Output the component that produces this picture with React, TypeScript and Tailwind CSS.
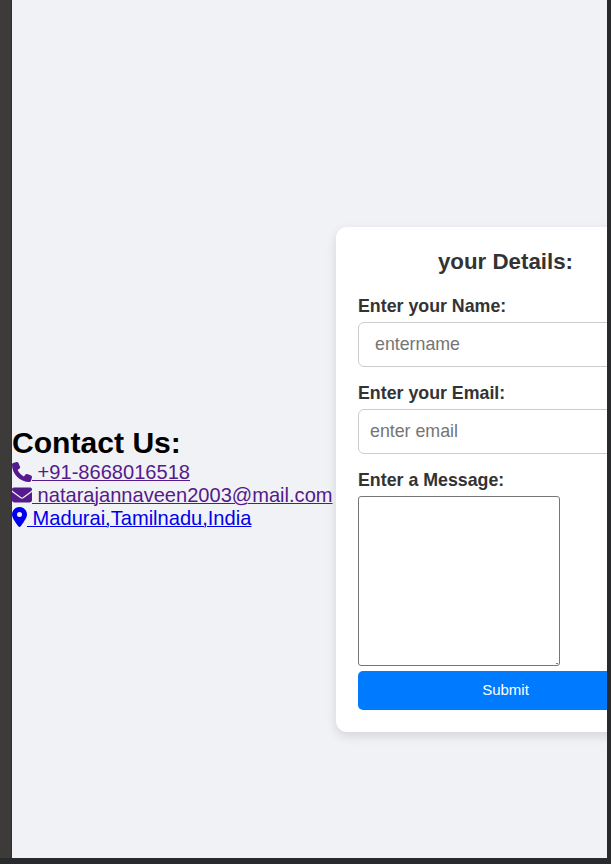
import { FaEnvelope, FaLocationDot, FaPhone } from "react-icons/fa6";

const labelClass = "block h-[20px] text-[17.8px] leading-[20px] font-bold text-[#333333]";
const inputClass =
  "block h-[45px] w-full rounded-[6px] border border-[#cccccc] bg-white text-[17.8px] text-[#333333] placeholder:text-[#757575] outline-none";
const linkTextClass = "whitespace-pre underline decoration-1 underline-offset-1";

export default function App() {
  return (
    <div className="h-[864px] w-[611px] overflow-hidden bg-[#292a2b] font-['Liberation_Sans',Arial,sans-serif]">
      <div className="flex h-[858px]">
        <div className="w-[12px] shrink-0 border-r border-[#303030] bg-[#3c3b3a]" />
        <main className="flex h-[858px] w-[595px] shrink-0 items-center overflow-hidden bg-[#f0f2f6]">
          <section className="mt-[98px] w-[323.5px] shrink-0 whitespace-nowrap text-[20.08px] leading-[23px]">
            <h1 className="h-[35px] text-[30.1px] leading-[33px] font-bold text-black">Contact Us:</h1>
            <a href="#phone" className="flex h-[23px] text-[#551a8b]">
              <FaPhone className="mt-[0.5px] size-[20px] shrink-0" />
              <span className={linkTextClass}>{" +91-8668016518"}</span>
            </a>
            <a href="#mail" className="flex h-[23px] text-[#551a8b]">
              <FaEnvelope className="mt-[0.5px] size-[20px] shrink-0" />
              <span className={linkTextClass}>{" natarajannaveen2003@mail.com"}</span>
            </a>
            <a href="#location" className="flex h-[23px] text-[#0000ee]">
              <FaLocationDot className="h-[20px] w-[15px] shrink-0" />
              <span className={linkTextClass}>{" Madurai,Tamilnadu,India"}</span>
            </a>
          </section>
          <form
            className="mt-[100.5px] h-[505.5px] w-[340px] shrink-0 rounded-[11px] bg-white px-[22.5px] pt-[22px] shadow-[0_4px_11px_rgba(0,0,0,0.12)]"
            onSubmit={(event) => event.preventDefault()}
          >
            <h2 className="mb-[21px] h-[26px] text-center text-[22.3px] leading-[26px] font-bold text-[#333333]">
              your Details:
            </h2>
            <label className={labelClass} htmlFor="name">Enter your Name:</label>
            <input id="name" className={`${inputClass} mt-[6px] mb-[16px] px-[16px]`} placeholder="entername" />
            <label className={labelClass} htmlFor="email">Enter your Email:</label>
            <input id="email" className={`${inputClass} mt-[6px] mb-[16px] px-[11px]`} placeholder="enter email" />
            <label className={labelClass} htmlFor="message">Enter a Message:</label>
            <div className="relative mt-[6px] w-[202px]">
              <textarea id="message" className="block h-[170px] w-full resize-none rounded-[3px] border border-[#767676] bg-white outline-none" />
              <span className="absolute right-[2px] bottom-[2px] h-px w-[2px] bg-[#767676]" />
            </div>
            <button type="submit" className="mt-[5px] block h-[39px] w-full rounded-[5px] bg-[#007bff] text-[15px] text-white">
              Submit
            </button>
          </form>
        </main>
      </div>
    </div>
  );
}
